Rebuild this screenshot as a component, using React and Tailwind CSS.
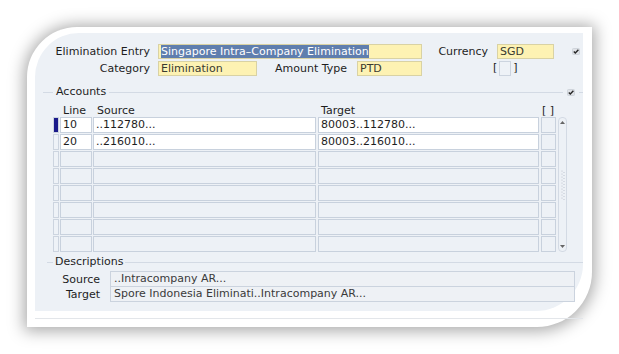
import React from "react";

const rows = [
  { line: "10", source: "..112780...", target: "80003..112780...", active: true },
  { line: "20", source: "..216010...", target: "80003..216010..." },
  {}, {}, {}, {}, {}, {},
];

function Check() {
  return (
    <svg width="8" height="7" viewBox="0 0 8 7">
      <rect x="0.5" y="0.5" width="7" height="6" rx="1" fill="#dfe2e7" stroke="#c9ced6" strokeWidth="0.8" />
      <path d="M1.8 3.6 L3.3 5.1 L6.4 1.8" stroke="#262626" strokeWidth="1.4" fill="none" />
    </svg>
  );
}

function Field({ className = "", children }) {
  return (
    <div className={`h-[15px] leading-[14px] border border-[#d9d2a4] bg-[#fdf2b3] px-[2px] text-[#3a3a30] whitespace-nowrap overflow-hidden ${className}`}>
      {children}
    </div>
  );
}

export default function App() {
  return (
    <div
      className="w-[619px] h-[354px] bg-white pt-[27px] pl-[27px] text-[11px] text-[#1e1e1e] overflow-hidden"
      style={{ fontFamily: '"DejaVu Sans", Verdana, sans-serif' }}
    >
      <div className="w-[565px] h-[300px] bg-white rounded-tl-[50px] rounded-br-[55px] shadow-[0_1px_16px_3px_rgba(0,0,0,0.34)] pt-[6px] pl-[8px] pr-[9px] pb-[8px] flex flex-col">
        <div className="flex-1 bg-[#edf1f6] rounded-tl-[44px] rounded-br-[47px] flex flex-col">
          {/* header row 1 */}
          <div className="mt-[11px] flex items-center h-[15px]">
            <div className="w-[115px] text-right leading-[15px]">Elimination Entry</div>
            <Field className="ml-[8px] w-[264px]">
              <span className="bg-[#5f7eae] text-white">Singapore Intra–Company Elimination</span>
            </Field>
            <div className="w-[66px] text-right leading-[15px]">Currency</div>
            <Field className="ml-[9px] w-[57px]">SGD</Field>
            <div className="ml-[18px] flex items-center"><Check /></div>
          </div>
          {/* header row 2 */}
          <div className="mt-[2px] flex items-center h-[15px]">
            <div className="w-[115px] text-right leading-[15px]">Category</div>
            <Field className="ml-[8px] w-[99px]">Elimination</Field>
            <div className="w-[90px] text-right leading-[15px]">Amount Type</div>
            <Field className="ml-[10px] w-[65px]">PTD</Field>
            <div className="ml-[71px] flex items-center gap-[2px]">
              <span>[</span>
              <div className="w-[12px] h-[15px] border border-[#ccd4df] bg-[#eef2f7]" />
              <span>]</span>
            </div>
          </div>

          {/* Accounts group */}
          <div className="mt-[10px] ml-[8px] flex flex-col">
            <div className="h-[12px] flex items-center">
              <div className="w-[10px] h-px bg-[#d3dae4]" />
              <span className="px-[3px] leading-[12px]">Accounts</span>
              <div className="flex-1 h-px bg-[#d3dae4]" />
              <div className="mx-[4px] flex items-center"><Check /></div>
              <div className="w-[4px] h-px bg-[#d3dae4]" />
            </div>

            <div className="mt-[7px] pl-[10px] h-[12px] flex items-center leading-[12px]">
              <div className="w-[6px]" />
              <div className="ml-[1px] w-[32px] pl-[3px]">Line</div>
              <div className="ml-[1px] w-[223px] pl-[4px]">Source</div>
              <div className="ml-[2px] w-[221px] pl-[3px]">Target</div>
              <div className="ml-[2px] w-[15px] pl-[1px] whitespace-pre">[ ]</div>
            </div>

            <div className="pl-[10px] flex">
              <div className="flex flex-col gap-[1px]">
                {rows.map((r, i) => (
                  <div key={i} className="flex h-[16px]">
                    <div className="w-[6px] h-[16px] border border-[#ccd4df] flex items-center justify-center bg-[#eef2f7]">
                      {r.active && <div className="w-[5px] h-[14px] bg-[#1a1a8a]" />}
                    </div>
                    <div className={`ml-[1px] w-[32px] border border-[#c8d1dd] pl-[2px] leading-[14px] ${r.line ? "bg-white" : "bg-[#edf1f6]"}`}>
                      {r.line}
                    </div>
                    <div className={`ml-[1px] w-[223px] border border-[#c8d1dd] pl-[2px] leading-[14px] ${r.line ? "bg-white" : "bg-[#edf1f6]"}`}>
                      {r.source}
                    </div>
                    <div className={`ml-[2px] w-[221px] border border-[#c8d1dd] pl-[2px] leading-[14px] ${r.line ? "bg-white" : "bg-[#edf1f6]"}`}>
                      {r.target}
                    </div>
                    <div className="ml-[2px] w-[15px] border border-[#c8d1dd] bg-[#edf1f6]" />
                  </div>
                ))}
              </div>
              {/* scrollbar */}
              <div className="ml-[2px] w-[9px] h-[135px] border border-[#d3dae4] rounded-[4px] flex flex-col items-center justify-between py-[3px]">
                <svg width="5" height="3" viewBox="0 0 5 3"><path d="M0 3 L2.5 0 L5 3 Z" fill="#666" /></svg>
                <svg width="4" height="30" viewBox="0 0 4 30">
                  {Array.from({ length: 10 }).map((_, k) => (
                    <g key={k}>
                      <circle cx="1" cy={k * 3 + 1} r="0.6" fill="#b8c0cc" />
                      <circle cx="3" cy={k * 3 + 2.5} r="0.6" fill="#b8c0cc" />
                    </g>
                  ))}
                </svg>
                <svg width="5" height="3" viewBox="0 0 5 3"><path d="M0 0 L2.5 3 L5 0 Z" fill="#666" /></svg>
              </div>
            </div>
          </div>

          {/* Descriptions */}
          <div className="mt-[4px] ml-[12px] h-[12px] flex items-center">
            <div className="w-[6px] h-px bg-[#d3dae4]" />
            <span className="px-[2px] leading-[12px]">Descriptions</span>
            <div className="flex-1 h-px bg-[#d3dae4]" />
          </div>
          <div className="mt-[3px] flex items-center h-[16px]">
            <div className="w-[65px] text-right leading-[15px]">Source</div>
            <div className="ml-[10px] w-[465px] h-[16px] border border-[#cbd3de] bg-[#eef1f5] pl-[3px] leading-[14px] text-[#3a3a3a]">..Intracompany AR...</div>
          </div>
          <div className="-mt-px flex items-center h-[16px]">
            <div className="w-[65px] text-right leading-[15px]">Target</div>
            <div className="ml-[10px] w-[465px] h-[16px] border border-[#cbd3de] bg-[#eef1f5] pl-[3px] leading-[14px] text-[#3a3a3a]">Spore Indonesia Eliminati..Intracompany AR...</div>
          </div>
        </div>
        <div className="mt-[7px] h-px bg-[#e3e6ea]" />
      </div>
    </div>
  );
}
